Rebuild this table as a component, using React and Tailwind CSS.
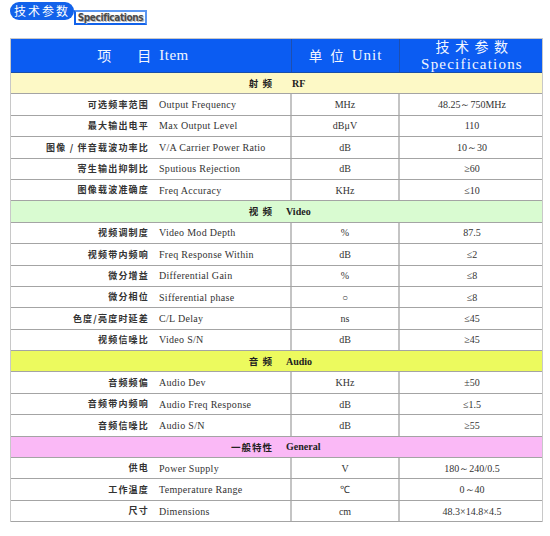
import React from "react";

const CN = "font-['Noto_Sans_CJK_SC','Noto_Sans',sans-serif]";
const EN = "font-['Liberation_Serif','Times_New_Roman',serif]";

const sections = [
  {
    cn: "射 频",
    en: "RF",
    bg: "bg-[#fdf9c6]",
    enCls: "pl-[19px] font-bold",
    rows: [
      ["可选频率范围", "Output Frequency", "MHz", "48.25～750MHz"],
      ["最大输出电平", "Max Output Level", "dBμV", "110"],
      ["图像 / 伴音载波功率比", "V/A Carrier Power Ratio", "dB", "10～30"],
      ["寄生输出抑制比", "Sputious Rejection", "dB", "≥60"],
      ["图像载波准确度", "Freq Accuracy", "KHz", "≤10"],
    ],
  },
  {
    cn: "视 频",
    en: "Video",
    bg: "bg-[#d9fbd1]",
    enCls: "pl-[13px] font-semibold",
    rows: [
      ["视频调制度", "Video Mod Depth", "%", "87.5"],
      ["视频带内频响", "Freq Response Within", "dB", "≤2"],
      ["微分增益", "Differential Gain", "%", "≤8"],
      ["微分相位", "Sifferential phase", "○", "≤8"],
      ["色度/亮度时延差", "C/L Delay", "ns", "≤45"],
      ["视频信噪比", "Video S/N", "dB", "≥45"],
    ],
  },
  {
    cn: "音 频",
    en: "Audio",
    bg: "bg-[#ecfa5e]",
    enCls: "pl-[13px] font-semibold",
    rows: [
      ["音频频偏", "Audio Dev", "KHz", "±50"],
      ["音频带内频响", "Audio Freq Response", "dB", "≤1.5"],
      ["音频信噪比", "Audio S/N", "dB", "≥55"],
    ],
  },
  {
    cn: "一般特性",
    en: "General",
    bg: "bg-[#fab9f6]",
    enCls: "pl-[13px] font-semibold",
    rows: [
      ["供电", "Power Supply", "V", "180～240/0.5"],
      ["工作温度", "Temperature Range", "℃", "0～40"],
      ["尺寸", "Dimensions", "cm", "48.3×14.8×4.5"],
    ],
  },
];

function SectionRow({ s }) {
  return (
    <div className={`flex h-[21.4px] items-center border-b border-[#a4a4a4] ${s.bg}`}>
      <div className={`w-[262px] text-right text-[9.5px] font-bold tracking-[1px] text-[#222] ${CN}`}>
        {s.cn}
      </div>
      <div className={`${s.enCls} text-[10px] text-[#222] ${EN}`}>{s.en}</div>
    </div>
  );
}

function DataRow({ r }) {
  return (
    <div className="grid h-[21.4px] grid-cols-[281px_108px_144px] border-b border-[#a4a4a4] bg-white">
      <div className="flex items-center border-r-2 border-[#c4c4c4]">
        <div
          className={`w-[138px] shrink-0 whitespace-nowrap text-right text-[9px] font-bold tracking-[1.2px] text-[#333] ${CN}`}
        >
          {r[0]}
        </div>
        <div className={`whitespace-nowrap pl-[10px] text-[10px] tracking-[0.3px] text-[#333] ${EN}`}>
          {r[1]}
        </div>
      </div>
      <div
        className={`flex items-center justify-center border-r-2 border-[#c4c4c4] text-[10px] text-[#333] ${EN}`}
      >
        {r[2]}
      </div>
      <div className={`flex items-center justify-center text-[10px] text-[#333] ${EN}`}>{r[3]}</div>
    </div>
  );
}

export default function App() {
  return (
    <div className="relative h-[536px] w-[550px] overflow-hidden bg-white">
      {/* Title */}
      <div className="flex items-start pl-[10px] pt-[2px]">
        <div
          className={`flex h-[18px] w-[64px] items-center justify-center rounded-full bg-[#1262ea] text-[12px] tracking-[2px] text-white ${CN}`}
        >
          技术参数
        </div>
        <div className="mt-[8px] flex h-[15px] w-[73px] items-center justify-center border-2 border-t-[#5a96f2] border-l-[#1262ea] border-b-[#1262ea] border-r-[#5a96f2] bg-white">
          <span className="font-['DejaVu_Sans_Condensed','DejaVu_Sans',sans-serif] text-[10px] font-bold leading-none tracking-[-0.4px] text-[#4a4a4a] [text-shadow:1px_1px_0_#bbb]">
            Specifications
          </span>
        </div>
      </div>

      {/* Table */}
      <div className="ml-[10px] mt-[13px] w-[533px] border-x border-t border-[#c8c8c8]">
        <div className="grid h-[34px] grid-cols-[281px_108px_144px] border-b border-[#1a4fa8] bg-[#0b5cf2] text-[#f2f6ff]">
          <div className="flex items-center justify-center border-r border-[#1e4fb0] pr-[16px]">
            <span className={`text-[14px] ${CN}`}>项</span>
            <span className={`ml-[26px] text-[14px] ${CN}`}>目</span>
            <span className={`ml-[8px] text-[15px] tracking-[0.5px] ${EN}`}>Item</span>
          </div>
          <div className="flex items-center justify-center border-r border-[#1e4fb0]">
            <span className={`text-[13.5px] tracking-[8px] ${CN}`}>单位</span>
            <span className={`text-[15px] tracking-[1px] ${EN}`}>Unit</span>
          </div>
          <div className="flex flex-col items-center justify-start gap-[3px]">
            <span className={`block h-[15px] pl-[5px] text-[14px] leading-[15px] tracking-[5.5px] ${CN}`}>
              技术参数
            </span>
            <span className={`block h-[15px] text-[15px] leading-[15px] tracking-[1.2px] ${EN}`}>
              Specifications
            </span>
          </div>
        </div>
        {sections.map((s) => (
          <React.Fragment key={s.en}>
            <SectionRow s={s} />
            {s.rows.map((r) => (
              <DataRow key={r[1]} r={r} />
            ))}
          </React.Fragment>
        ))}
      </div>
    </div>
  );
}
